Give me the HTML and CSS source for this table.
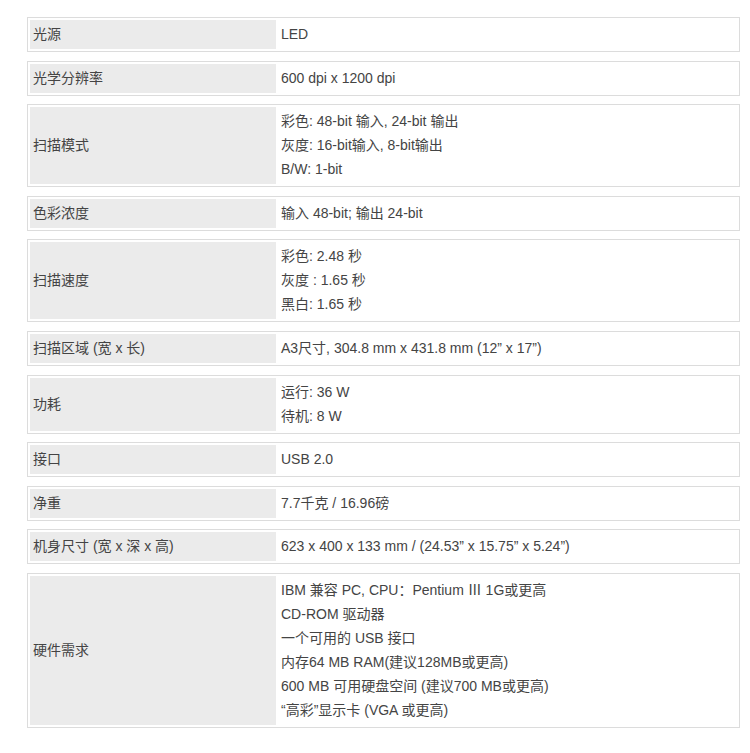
FILE: index.html
```html
<!DOCTYPE html>
<html lang="zh-CN">
<head>
<meta charset="utf-8">
<title>规格</title>
<link rel="stylesheet" href="styles.css">
</head>
<body>
<div class="specs">
  <table class="spec"><tr><td class="label">光源</td><td class="value">LED</td></tr></table>
  <table class="spec"><tr><td class="label">光学分辨率</td><td class="value">600 dpi x 1200 dpi</td></tr></table>
  <table class="spec"><tr><td class="label">扫描模式</td><td class="value">彩色: 48-bit 输入, 24-bit 输出<br>灰度: 16-bit输入, 8-bit输出<br>B/W: 1-bit</td></tr></table>
  <table class="spec"><tr><td class="label">色彩浓度</td><td class="value">输入 48-bit; 输出 24-bit</td></tr></table>
  <table class="spec"><tr><td class="label">扫描速度</td><td class="value">彩色: 2.48 秒<br>灰度 : 1.65 秒<br>黑白: 1.65 秒</td></tr></table>
  <table class="spec"><tr><td class="label">扫描区域 (宽 x 长)</td><td class="value">A3尺寸, 304.8 mm x 431.8 mm (12” x 17”)</td></tr></table>
  <table class="spec"><tr><td class="label">功耗</td><td class="value">运行: 36 W<br>待机: 8 W</td></tr></table>
  <table class="spec"><tr><td class="label">接口</td><td class="value">USB 2.0</td></tr></table>
  <table class="spec"><tr><td class="label">净重</td><td class="value">7.7千克 / 16.96磅</td></tr></table>
  <table class="spec"><tr><td class="label">机身尺寸 (宽 x 深 x 高)</td><td class="value">623 x 400 x 133 mm / (24.53” x 15.75” x 5.24”)</td></tr></table>
  <table class="spec"><tr><td class="label">硬件需求</td><td class="value">IBM 兼容 PC, CPU：Pentium Ⅲ 1G或更高<br>CD-ROM 驱动器<br>一个可用的 USB 接口<br>内存64 MB RAM(建议128MB或更高)<br>600 MB 可用硬盘空间 (建议700 MB或更高)<br>“高彩”显示卡 (VGA 或更高)</td></tr></table>
</div>
</body>
</html>
```
FILE: styles.css
```css
html, body {
  margin: 0;
  padding: 0;
  background: #fff;
}
body {
  font-family: "Liberation Sans", Arial, "Noto Sans CJK SC", sans-serif;
  font-size: 14px;
  color: #444;
}
.specs {
  padding: 17px 0 0 27px;
  width: 713px;
}
.spec {
  width: 713px;
  border: 1px solid #dcdcdc;
  border-collapse: separate;
  border-spacing: 2px;
  margin-bottom: 8.6px;
}
.spec td {
  padding: 2px 3px 3px 3px;
  line-height: 24px;
  vertical-align: middle;
}
.spec .label {
  width: 240px;
  background: #ebebeb;
}
.spec .value {
  background: #fff;
}
```
